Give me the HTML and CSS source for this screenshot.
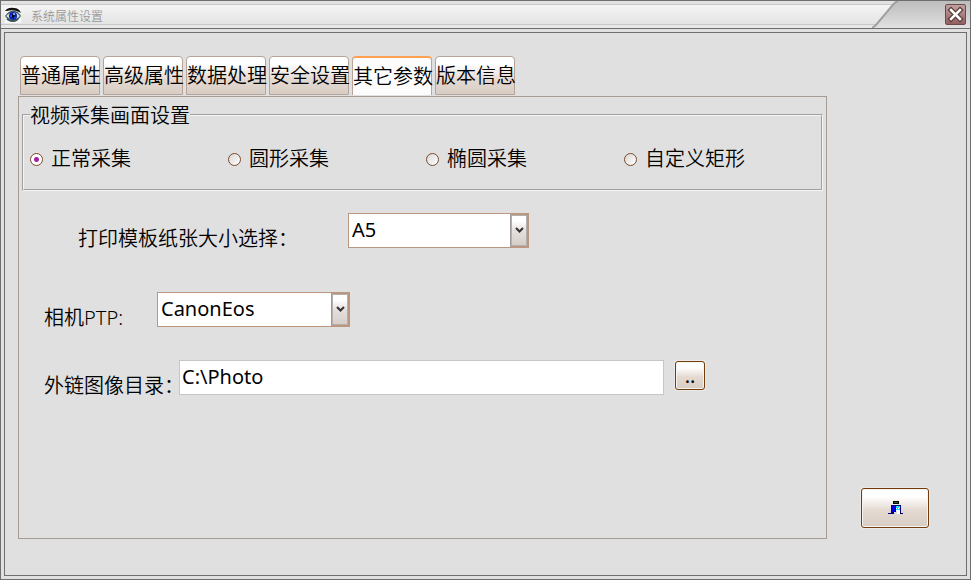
FILE: index.html
```html
<!DOCTYPE html>
<html lang="zh-CN">
<head>
    <meta charset="UTF-8">
    <meta name="viewport" content="width=device-width, initial-scale=1.0">
    <title>系统属性设置</title>
    <link rel="stylesheet" href="styles.css">
</head>
<body>
    <div class="window">
        <div class="titlebar">
            <div class="title-left">
                <svg class="app-icon" width="16" height="16" viewBox="0 0 16 16">
                    <rect width="16" height="16" fill="#f8f8f8"/>
                    <path d="M0 4 Q3 0 9 1 Q14 1 16 6 L14 5 Q8 2 2 4 Z" fill="#111"/>
                    <path d="M0 9 Q4 3 10 4 Q14 5 16 9 Q13 14 8 15 Q3 14 0 9 Z" fill="#3c5358"/>
                    <path d="M1 9 Q5 5 9 5 Q13 6 15 9 Q11 13 7 13 Q4 12 1 9 Z" fill="#c9dcda"/>
                    <circle cx="8" cy="9" r="4" fill="#0a20b0"/>
                    <circle cx="8" cy="9" r="1.500" fill="#000"/>
                    <path d="M5 8 h2 v2 h-2z M9 10 h2 v1 h-2z" fill="#1848f0"/>
                    <circle cx="9" cy="7" r="1" fill="#9cf"/>
                    <path d="M2 12 Q8 16 13 12" stroke="#3c5358" stroke-width="2" fill="none"/>
                </svg>
                <span class="title-text">系统属性设置</span>
            </div>
            <svg class="title-slash" width="28" height="27" viewBox="0 0 28 27">
                <path d="M26 0 Q23 1 20 5 L4 24 L0 27 H28 V0 Z" fill="url(#slash)"/>
                <path d="M26 0 Q23 1 20 5 L4 24 L0 27" fill="none" stroke="#a0a0a0" stroke-width="2"/>
                <defs>
                    <linearGradient id="slash" x1="0" y1="0" x2="0" y2="1">
                        <stop offset="0" stop-color="#bdbdbd"/>
                        <stop offset="0.5" stop-color="#cecece"/>
                        <stop offset="1" stop-color="#e2e2e2"/>
                    </linearGradient>
                </defs>
            </svg>
            <div class="title-right">
                <button class="close" type="button" aria-label="关闭">
                    <svg width="19" height="19" viewBox="0 0 19 19">
                        <path d="M5 5 L14 14 M14 5 L5 14" stroke="#5b3a3a" stroke-width="5" stroke-linecap="square"/>
                        <path d="M5 5 L14 14 M14 5 L5 14" stroke="#fff" stroke-width="2.500" stroke-linecap="square"/>
                    </svg>
                </button>
            </div>
        </div>

        <form class="frame">
            <div class="main">
                <div class="tabs">
                    <button class="tab" type="button">普通属性</button>
                    <button class="tab" type="button">高级属性</button>
                    <button class="tab" type="button">数据处理</button>
                    <button class="tab" type="button">安全设置</button>
                    <button class="tab active" type="button">其它参数</button>
                    <button class="tab" type="button">版本信息</button>
                </div>

                <div class="panel">
                    <fieldset class="group">
                        <legend>视频采集画面设置</legend>
                        <div class="radios">
                            <label><input type="radio" name="shape" checked>正常采集</label>
                            <label><input type="radio" name="shape">圆形采集</label>
                            <label><input type="radio" name="shape">椭圆采集</label>
                            <label><input type="radio" name="shape">自定义矩形</label>
                        </div>
                    </fieldset>

                    <div class="row row-paper">
                        <label for="paper">打印模板纸张大小选择：</label>
                        <div class="combo">
                            <select id="paper">
                                <option>A5</option>
                            </select>
                            <span class="arrow"><svg width="9" height="7" viewBox="0 0 9 7"><path d="M1 1 L4.500 4.500 L8 1" fill="none" stroke="#333" stroke-width="2"/></svg></span>
                        </div>
                    </div>

                    <div class="row row-camera">
                        <label for="camera">相机PTP:</label>
                        <div class="combo">
                            <select id="camera">
                                <option>CanonEos</option>
                            </select>
                            <span class="arrow"><svg width="9" height="7" viewBox="0 0 9 7"><path d="M1 1 L4.500 4.500 L8 1" fill="none" stroke="#333" stroke-width="2"/></svg></span>
                        </div>
                    </div>

                    <div class="row row-folder">
                        <label for="folder">外链图像目录：</label>
                        <input class="text" type="text" id="folder" value="C:\Photo">
                        <button class="btn browse" type="button">..</button>
                    </div>
                </div>
            </div>

            <button class="btn exit" type="button" aria-label="退出">
                <svg width="15" height="14" viewBox="0 0 15 14" shape-rendering="crispEdges">
                    <rect x="5" y="0" width="6" height="3" fill="#000"/>
                    <rect x="6" y="1" width="4" height="1" fill="#008000"/>
                    <path d="M3 4 H13 V12 H15 V13 H12 V5 H8 V11 H6 V13 H0 V12 H3 Z" fill="#000080"/>
                    <path d="M4 5 H7 V11 H4 Z" fill="#0000e0"/>
                    <rect x="8" y="5" width="4" height="5" fill="#00e0e8"/>
                    <path d="M9 5h1v1h-1z M11 6h1v1h-1z M8 7h1v1h-1z M10 7h1v1h-1z M8 9h1v1h-1z M9 9h3v4h-3z" fill="#fff"/>
                </svg>
            </button>
        </form>
    </div>
</body>
</html>
```

FILE: styles.css
```css
/* General styles */
* {
    box-sizing: border-box;
}
body {
    font-family: "Noto Sans", "Noto Sans CJK SC", sans-serif;
    font-size: 20px;
    font-weight: 350;
    line-height: 24px;
    margin: 0;
    background-color: #e0e0e0;
    color: #000;
}
button, select, input {
    font: inherit;
    color: inherit;
    margin: 0;
}
.window {
    min-height: 100vh;
    display: flex;
    flex-direction: column;
    border: 1px solid #6e6e6e;
}

/* Title bar */
.titlebar {
    display: flex;
    height: 28px;
    border-bottom: 1px solid #6e6e6e;
}
.title-left {
    flex: 1;
    display: flex;
    align-items: center;
    gap: 10px;
    padding-left: 4px;
    background: linear-gradient(#e2e2e2 3px, #c8c8c8 3px, #c8c8c8 4px, #f4f4f4 4px, #e4e4e4 23px, #c8c8c8 23px, #c8c8c8 24px, #e8e8e8 24px);
}
.title-text {
    font-size: 12px;
    color: #999;
    padding-top: 4px;
}
.title-slash {
    background: linear-gradient(#e2e2e2 3px, #c8c8c8 3px, #c8c8c8 4px, #f4f4f4 4px, #e4e4e4 23px, #c8c8c8 23px, #c8c8c8 24px, #e8e8e8 24px);
}
.title-right {
    width: 70px;
    padding: 3px 4px 0 0;
    text-align: right;
    background: linear-gradient(#bdbdbd, #cecece 50%, #e2e2e2);
}
.close {
    width: 21px;
    height: 21px;
    padding: 0;
    border: 1px solid #6d4a4a;
    border-radius: 2px;
    background: linear-gradient(#c0a0a0, #935f5f);
}
.close svg {
    display: block;
}

/* Window frame */
.frame {
    flex: 1;
    display: flex;
    align-items: flex-end;
    gap: 34px;
    margin: 3px;
    padding: 23px 37px 36px 13px;
    border: 1px solid #6e6e6e;
}
.main {
    flex: 1;
    align-self: stretch;
    display: flex;
    flex-direction: column;
}

/* Tabs */
.tabs {
    display: flex;
    gap: 3px;
    padding: 0 0 1px 2px;
}
.tab {
    width: 80px;
    height: 39px;
    padding: 1px 0 0;
    border: 1px solid #b5a497;
    border-radius: 4px 4px 0 0;
    background: linear-gradient(#fff 20%, #e5dad2 60%, #d8cdc5);
    white-space: nowrap;
}
.tab.active {
    border-top: 2px solid #ffa050;
    border-bottom: 0;
    background: #fcfcfc;
}

.panel {
    flex: 1;
    padding: 6px 3px;
    border: 1px solid #a59c94;
}
.group {
    margin: 0 0 22px;
    padding: 17px 6px 15px;
    border: 2px groove #f4f4f4;
}
.group legend {
    padding: 2px 0 0;
    line-height: 22px;
}
.radios {
    display: flex;
    line-height: 30px;
}
.radios label {
    display: flex;
    align-items: center;
    gap: 8px;
    width: 198px;
}
.radios label:last-child {
    width: auto;
}
.radios input {
    appearance: none;
    width: 13px;
    height: 13px;
    border: 1px solid #7b4a28;
    border-radius: 50%;
    background: linear-gradient(135deg, #d8d8d8, #fff);
}
.radios input:checked {
    background: radial-gradient(circle, #a020a8 2px, #fff 3px);
}

/* Setting rows */
.row {
    display: flex;
    align-items: flex-start;
    padding-left: 22px;
}
.row label {
    padding-top: 14px;
    white-space: nowrap;
}
.row-paper {
    padding-left: 56px;
    margin-bottom: 41px;
}
.row-paper label {
    width: 270px;
}
.row-paper .combo {
    width: 181px;
}
.row-camera {
    margin-bottom: 30px;
}
.row-camera label {
    width: 113px;
}
.row-camera .combo {
    width: 193px;
}
.row-folder label {
    width: 135px;
}

.combo {
    position: relative;
}
.combo select {
    appearance: none;
    display: block;
    width: 100%;
    height: 35px;
    padding: 0 20px 2px 3px;
    border: 1px solid #bb9780;
    border-radius: 0;
    background: #fff;
    font-weight: 400;
}
.combo .arrow {
    position: absolute;
    top: 0;
    right: 0;
    bottom: 0;
    width: 19px;
    display: flex;
    align-items: center;
    justify-content: center;
    border: 1px solid #a09a98;
    border-width: 2px 2px 2px 1px;
    border-color: #bb9780 #bb9780 #bb9780 #a09a98;
    background: linear-gradient(#fff 20%, #e5e0de 50%, #d5ccc6);
    box-shadow: inset 0 0 0 1px #b5b0ae;
    pointer-events: none;
}
.text {
    flex: 1;
    max-width: 485px;
    min-width: 0;
    height: 35px;
    padding: 0 2px 2px;
    border: 1px solid #c6c6c6;
    background: #fff;
    font-weight: 400;
}

.btn {
    padding: 0;
    border: 1px solid #713d0e;
    border-radius: 3px;
    background: linear-gradient(#fff 20%, #e5dad2 55%, #d8cdc5);
    box-shadow: 0 0 0 1px #ece9e6, inset 0 0 0 1px #f8f4f0;
    font-weight: 400;
}
.browse {
    width: 30px;
    height: 29px;
    margin: 1px 0 0 11px;
}
.exit {
    flex-shrink: 0;
    width: 68px;
    height: 40px;
    margin-bottom: 11px;
}
```
